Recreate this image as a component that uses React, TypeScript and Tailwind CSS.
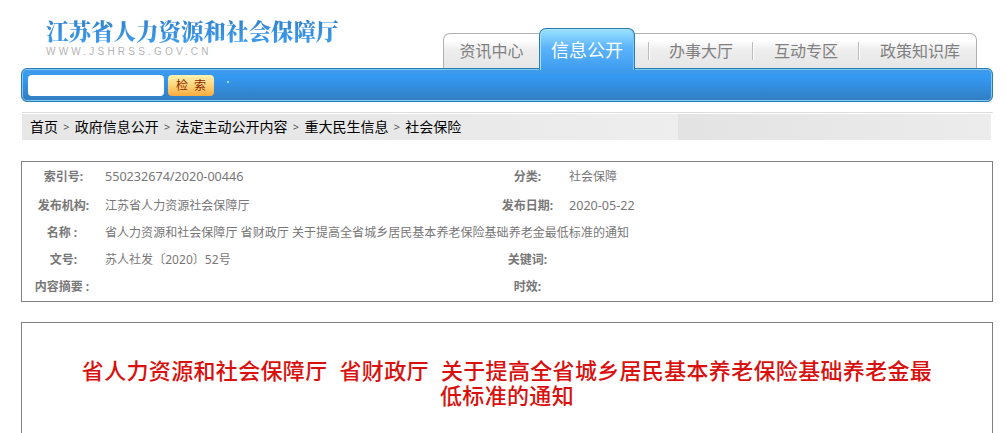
import { Fragment } from "react";

type Field = { label: string; value: string; numeric?: boolean };

const CRUMBS = ["首页", "政府信息公开", "法定主动公开内容", "重大民生信息", "社会保险"];

// Each row holds one or two label/value pairs.
const ROWS: { height: string; fields: Field[] }[] = [
  {
    height: "h-[30px]",
    fields: [
      { label: "索引号:", value: "550232674/2020-00446", numeric: true },
      { label: "分类:", value: "社会保障" },
    ],
  },
  {
    height: "h-[27px]",
    fields: [
      { label: "发布机构:", value: "江苏省人力资源社会保障厅" },
      { label: "发布日期:", value: "2020-05-22", numeric: true },
    ],
  },
  {
    height: "h-[27px]",
    fields: [
      {
        label: "名称\u00a0:\u00a0",
        value: "省人力资源和社会保障厅 省财政厅 关于提高全省城乡居民基本养老保险基础养老金最低标准的通知",
      },
    ],
  },
  {
    height: "h-[27px]",
    fields: [
      { label: "文号:", value: "苏人社发〔2020〕52号" },
      { label: "关键词:", value: "" },
    ],
  },
  {
    height: "h-[27px]",
    fields: [
      { label: "内容摘要\u00a0:\u00a0", value: "" },
      { label: "时效:", value: "" },
    ],
  },
];

export default function App() {
  return (
    <div className="h-[433px] w-[1007px] overflow-hidden bg-white font-['Noto_Sans','Noto_Sans_CJK_SC',sans-serif] whitespace-nowrap">
      <Header />
      <SearchBar />
      <Breadcrumb />
      <InfoTable />
      <Article />
    </div>
  );
}

function Header() {
  return (
    <header className="flex h-[68px] items-end justify-between pr-[30px] pl-[46px]">
      <div className="flex h-full flex-col pt-[16px]">
        <div className="bg-linear-to-b from-[#2f7fc9] to-[#3c9cf0] bg-clip-text font-['Noto_Serif_CJK_SC','Noto_Sans_CJK_SC',serif] text-[22.5px] leading-[28px] font-black text-transparent">
          江苏省人力资源和社会保障厅
        </div>
        <div className="mt-px font-['Liberation_Sans',sans-serif] text-[10px] leading-[14px] tracking-[3.2px] text-[#b4b4b4]">
          WWW.JSHRSS.GOV.CN
        </div>
      </div>
      <nav className="flex h-[35px] w-[534px] items-end rounded-t-[7px] border border-b-0 border-[#b0b0b0] bg-linear-to-b from-white from-20% via-[#eeeeee] via-45% to-[#e6e6e6] text-base text-[#808080]">
        <a className="flex h-[34px] w-[95px] items-center justify-center">资讯中心</a>
        <a className="relative z-10 -mb-[2px] flex h-[42px] w-[96px] items-center justify-center rounded-t-[7px] border border-b-0 border-[#2b7eb0] bg-linear-to-b from-[#9be2ff] via-[#5cb4fa] via-45% to-[#3d9cf0] text-lg text-white shadow-[inset_1px_1px_0_#a4e2fb,inset_-1px_0_0_#7cc9f5]">
          信息公开
        </a>
        <div className="flex h-[34px] flex-1 items-center">
          <Divider className="ml-[13px]" />
          <a className="ml-[19px]">办事大厅</a>
          <Divider className="ml-[19px]" />
          <a className="ml-[20px]">互动专区</a>
          <Divider className="ml-[20px]" />
          <a className="ml-[20px]">政策知识库</a>
        </div>
      </nav>
    </header>
  );
}

function Divider({ className }: { className: string }) {
  return <span className={`h-[18px] w-[2px] border-r border-l border-r-white border-l-[#bcbcbc] ${className}`} />;
}

function SearchBar() {
  return (
    <div className="ml-[21px] flex h-[34px] w-[972px] items-center rounded-[6px] border border-[#2b7ab0] bg-linear-to-b from-[#429be6] via-[#3399f3] via-25% to-[#327dc0] pl-[6px] shadow-[inset_0_0_0_1px_#80c9f3]">
      <input className="h-[21px] w-[136px] rounded-[4px] bg-white outline-none" />
      <button className="ml-1 h-[21px] w-[46px] rounded-[4px] bg-linear-to-b from-[#fff3b0] via-[#fdd478] to-[#f9aa3d] text-xs leading-[21px] text-[#8c2b00]">
        检&nbsp; 索
      </button>
      <span className="mb-[6px] ml-[13px] size-[2px] bg-[#a9d9ff]" />
    </div>
  );
}

function Breadcrumb() {
  return (
    <div className="mt-[10px] ml-[22px] w-[971px] border-t border-[#dedcd8] pt-px">
      <div className="flex h-[26px] w-[969px] bg-[#e7e7e7]">
        <div className="flex w-[656px] items-center bg-linear-to-r from-[#e7e7e7] from-50% to-[#eeeeee] pl-[8px] text-sm text-black">
          {CRUMBS.map((crumb, i) => (
            <Fragment key={crumb}>
              {i > 0 && <span className="w-[16.8px] text-center text-[11px] text-[#555555]">&gt;</span>}
              <a>{crumb}</a>
            </Fragment>
          ))}
        </div>
        <div className="flex-1 bg-linear-to-r from-[#e3e3e3] to-[#ececec]" />
      </div>
    </div>
  );
}

function InfoTable() {
  return (
    <div className="mt-[21px] ml-[21px] h-[141px] w-[972px] border border-[#808080] text-xs text-[#777777]">
      {ROWS.map((row) => (
        <div key={row.fields[0].label} className={`flex items-center ${row.height}`}>
          {row.fields.map((field) => (
            <div key={field.label} className="flex w-[464px] items-center">
              <span className="w-[83px] shrink-0 text-center font-bold">{field.label}</span>
              <span className={field.numeric ? "pt-px text-[12.6px]" : "tracking-[0.04px]"}>{field.value}</span>
            </div>
          ))}
        </div>
      ))}
    </div>
  );
}

function Article() {
  return (
    <div className="mt-5 ml-[21px] h-[120px] w-[972px] border border-[#808080] pt-[35px]">
      <h1 className="text-center text-[22px] leading-[25px] font-medium tracking-[0.33px] text-[#d8110f] [word-spacing:6px]">
        省人力资源和社会保障厅 省财政厅 关于提高全省城乡居民基本养老保险基础养老金最
        <br />
        低标准的通知
      </h1>
    </div>
  );
}
